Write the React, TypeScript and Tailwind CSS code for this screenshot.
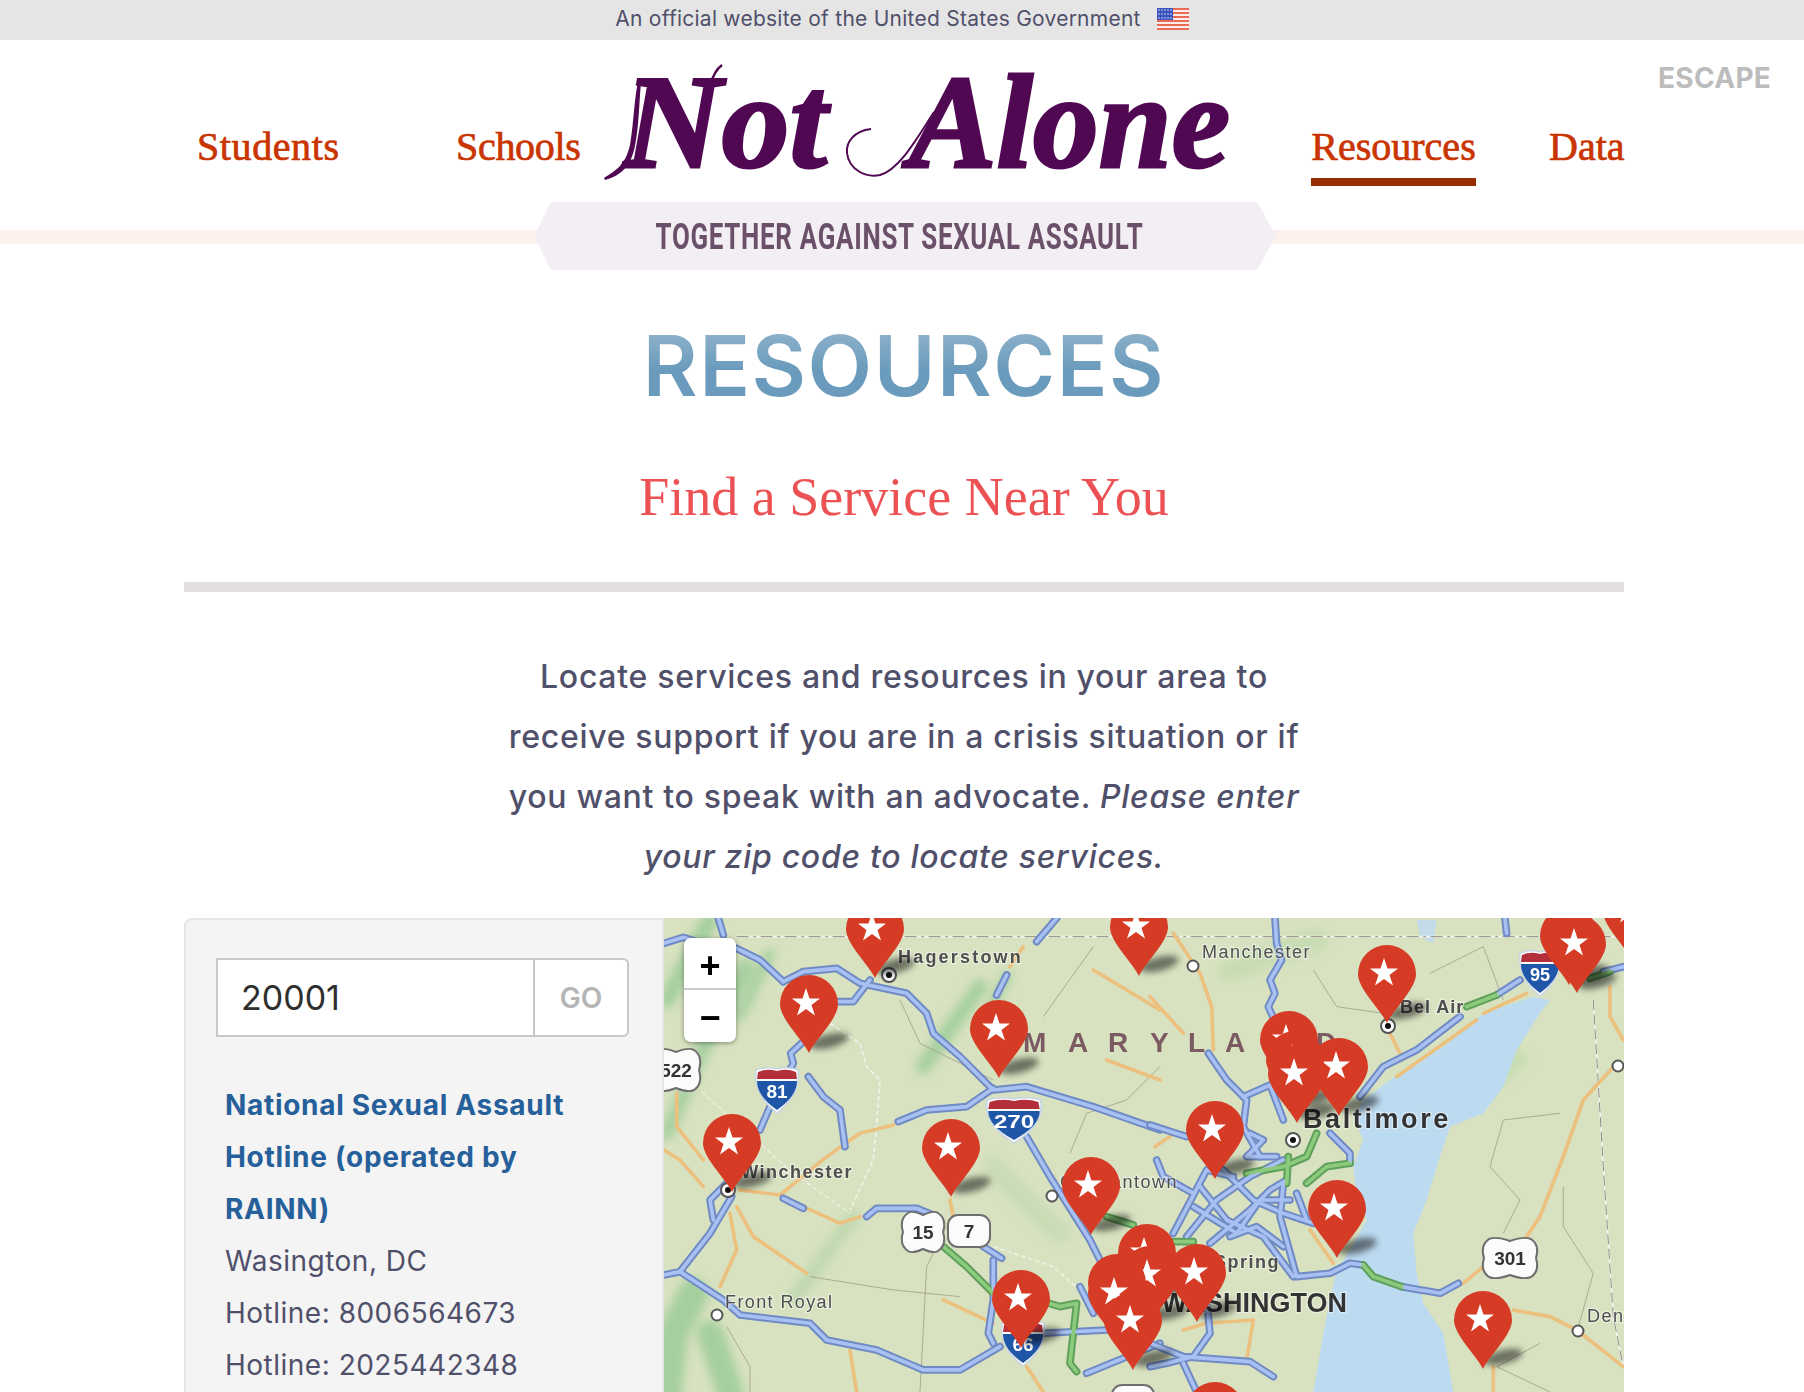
const SANS = "font-['Inter','Liberation_Sans',sans-serif]";

// map data, coordinates taken from the 3x crops of the map
const leftRoads = [
  "12,130 70,112 110,125",
  "175,55 190,105",
  "230,145 300,180 370,245",
  "430,215 530,205 600,250 740,280 800,340 820,400 900,470 1000,570 1100,560 1300,620 1500,690",
  "370,245 430,215",
  "535,305 580,305 630,240",
  "1130,125 1190,55",
  "1010,285 1040,225",
  "430,425 392,460 400,490 330,620 300,690",
  "215,890 150,1000 60,1115 12,1125",
  "160,960 150,900 200,850",
  "60,1115 190,1200 240,1245 450,1270 500,1320 650,1350 790,1410 900,1410 1020,1340",
  "445,530 490,590 540,630 555,740",
  "715,665 800,630 920,620 1000,565",
  "1100,710 1170,830 1290,1020 1320,1080",
  "620,950 650,925 770,925 830,950",
  "370,895 430,925",
  "970,1040 1025,1075",
  "1000,1080 1000,1200 985,1300 1000,1330",
  "1090,1305 1150,1300 1340,1290",
  "1260,1160 1300,1240",
  "1280,1420 1500,1330",
];
const leftGreen = [
  "850,1040 920,1100 1000,1180 1100,1190 1200,1220 1250,1210 1240,1300 1230,1390 1250,1415",
  "1340,950 1420,975",
];
const leftOrange = [
  "50,580 50,680 130,780",
  "12,750 60,780 130,860",
  "240,870 360,885 500,770 600,700 700,675",
  "430,920 540,970 600,950",
  "230,920 280,1010 440,1120",
  "210,940 230,1050 180,1160",
  "870,900 880,950",
  "850,1200 1000,1270",
  "1100,1400 1150,1476",
  "570,1350 590,1476",
  "1090,140 1050,200",
  "1300,210 1400,270 1500,330",
  "1340,480 1500,540",
];
const rightRoads = [
  "375,55 380,130 395,180 360,240 375,280 355,320 400,420",
  "175,460 230,540 290,600 280,680 330,770",
  "280,590 360,555 400,660",
  "0,675 110,710",
  "630,590 700,500 800,450 930,350",
  "1040,285 1110,240",
  "1360,215 1420,200",
  "1065,55 1070,100",
  "70,1000 170,810 250,830",
  "110,1010 200,900 300,830 400,780",
  "180,1030 300,930 360,870 410,840",
  "150,860 230,960 340,1010 430,1130",
  "220,810 310,900 400,940 490,970",
  "400,850 390,950 440,1130 540,1120 600,1090 640,1095",
  "20,780 40,830 130,880",
  "755,1160 870,1180 925,1150",
  "540,700 600,760 600,790",
  "170,1200 180,1300 130,1370 50,1390 0,1400",
  "0,1330 100,1370 300,1385 370,1430",
  "100,1390 140,1476",
  "240,1010 320,980 400,1040",
  "130,920 260,1000 330,900 420,900",
  "300,700 340,720 290,770 380,770",
  "440,880 470,960",
];
const rightGreen = [
  "640,1095 670,1130 755,1160",
  "950,320 1040,285",
  "1320,235 1380,215",
  "290,820 400,800 470,770 500,700",
  "415,770 410,850",
  "470,850 530,800 600,790",
  "60,1025 130,1025",
];
const rightOrange = [
  "70,100 150,220 185,320 190,450",
  "0,290 100,400",
  "720,400 750,460",
  "740,530 980,360",
  "1130,280 1000,340",
  "1380,260 1380,350 1420,420",
  "1400,490 1300,600 1240,770 1170,950 1130,1010",
  "1000,1100 940,1150",
  "1090,1230 1200,1250 1280,1290 1420,1400",
  "100,1290 170,1270 310,1260 290,1380",
  "480,990 550,1090",
  "1030,1400 1030,1476",
  "15,740 60,710",
];
const thinLines = [
  "720,300 780,430 900,490 1000,540",
  "780,1476 800,1100 880,940",
  "450,1130 700,1170 900,1190",
  "1150,350 1300,140",
  "1230,760 1280,640 1400,600 1500,500",
  "200,1280 270,1400 270,1476",
];
const thinLinesRight = [
  "490,210 560,320 700,340",
  "1020,800 1060,660 1230,640",
  "1020,800 1110,900 1060,1000",
  "1240,860 1240,980 1330,1120 1280,1300",
  "840,220 1000,140 1060,300",
  "1200,1476 1040,1400 1170,1330",
];
const pins = [
  [875, 978], [809, 1053], [999, 1078], [732, 1192], [951, 1197], [1091, 1235], [1021, 1348],
  [1139, 976], [1387, 1023], [1569, 985], [1577, 993], [1632, 960],
  [1289, 1089], [1339, 1116], [1295, 1109], [1297, 1123],
  [1215, 1179], [1337, 1258], [1147, 1302], [1150, 1324], [1117, 1332], [1197, 1322], [1117, 1342], [1133, 1370],
  [1483, 1369], [1215, 1460],
];
const cityDots = [
  [889, 975, true], [728, 1190, true], [717, 1315, false], [1052, 1196, false], [1193, 966, false],
  [1388, 1026, true], [1293, 1140, true], [1578, 1331, false], [1618, 1066, false],
] as const;

function Roads({ lines, green, orange }: { lines: string[]; green: string[]; orange: string[] }) {
  return (
    <g fill="none" strokeLinecap="round" strokeLinejoin="round">
      {orange.map((p) => (
        <polyline key={p} points={p} stroke="#ecc07e" strokeWidth="11" />
      ))}
      {lines.map((p) => (
        <polyline key={p} points={p} stroke="#6f8bc4" strokeWidth="23" />
      ))}
      {green.map((p) => (
        <polyline key={p} points={p} stroke="#5fa05c" strokeWidth="23" />
      ))}
      {lines.map((p) => (
        <polyline key={p + "i"} points={p} stroke="#a9c1f2" strokeWidth="11" />
      ))}
      {green.map((p) => (
        <polyline key={p + "i"} points={p} stroke="#8ccb7c" strokeWidth="11" />
      ))}
    </g>
  );
}

function InterstateShield({ x, y, label, w = 42 }: { x: number; y: number; label: string; w?: number }) {
  const s = w / 42;
  return (
    <g transform={`translate(${x},${y}) scale(${s},1)`}>
      <path d="M-21,-20 Q-10,-24 0,-21 Q10,-24 21,-20 Q24,4 0,23 Q-24,4 -21,-20Z" fill="#fff" stroke="#c9d6e6" strokeWidth="1.5" />
      <path d="M-19,-18 Q-10,-22 0,-19 Q10,-22 19,-18 L20,-11 L-20,-11Z" fill="#b3303a" />
      <path d="M-20,-9 L20,-9 Q20,6 0,20 Q-20,6 -20,-9Z" fill="#1f56a8" />
      <text y="8" textAnchor="middle" fontFamily="Liberation Sans" fontWeight="700" fontSize="19" fill="#fff">
        {label}
      </text>
    </g>
  );
}

function RouteShield({ x, y, w, h, label, scallop = false }: {
  x: number;
  y: number;
  w: number;
  h: number;
  label: string;
  scallop?: boolean;
}) {
  const l = x - w / 2;
  const r = x + w / 2;
  const t = y - h / 2;
  const b = y + h / 2;
  return (
    <g>
      {scallop ? (
        <path
          d={`M${l + 7},${t} Q${x - w / 4},${t - 3} ${x},${t + 2} Q${x + w / 4},${t - 3} ${r - 7},${t} Q${r + 2},${t + 6} ${r - 2},${y} Q${r + 2},${b - 6} ${r - 7},${b} Q${x + w / 4},${b + 3} ${x},${b - 2} Q${x - w / 4},${b + 3} ${l + 7},${b} Q${l - 2},${b - 6} ${l + 2},${y} Q${l - 2},${t + 6} ${l + 7},${t}Z`}
          fill="#fbfbfb"
          stroke="#6f6f6f"
          strokeWidth="2"
        />
      ) : (
        <rect x={l} y={t} width={w} height={h} rx="10" fill="#fbfbfb" stroke="#6f6f6f" strokeWidth="2" />
      )}
      <text x={x} y={y + 7} textAnchor="middle" fontFamily="Liberation Sans" fontWeight="700" fontSize="19" fill="#333">
        {label}
      </text>
    </g>
  );
}

function MapLabel({ x, y, children, size = 18, spacing = 1.5, weight = 700, anchor = "start", fill = "#4f4f4f" }: {
  x: number;
  y: number;
  children: string;
  size?: number;
  spacing?: number;
  weight?: number;
  anchor?: "start" | "end";
  fill?: string;
}) {
  return (
    <text
      x={x}
      y={y}
      textAnchor={anchor}
      fontFamily="Liberation Sans"
      fontWeight={weight}
      fontSize={size}
      letterSpacing={spacing}
      fill={fill}
      stroke="#fff"
      strokeOpacity="0.45"
      strokeWidth="2.5"
      paintOrder="stroke"
    >
      {children}
    </text>
  );
}

function MapArt() {
  return (
    <svg viewBox="664 918 960 474" className="block w-[960px] h-[474px]">
      <defs>
        <filter id="soft" x="-5%" y="-5%" width="110%" height="110%">
          <feGaussianBlur stdDeviation="0.6" />
        </filter>
        <filter id="wide" x="-20%" y="-20%" width="140%" height="140%">
          <feGaussianBlur stdDeviation="5" />
        </filter>
        <filter id="shadow" x="-50%" y="-100%" width="200%" height="300%">
          <feGaussianBlur stdDeviation="3" />
        </filter>
      </defs>
      <rect x="664" y="918" width="960" height="474" fill="#d8e2c0" />

      {/* ridges and water */}
      <g filter="url(#wide)">
        <g transform="translate(660,900) scale(0.3333)" fill="none" stroke="#a5cf9f" strokeLinecap="round">
          <polyline points="150,60 20,300" strokeWidth="50" />
          <polyline points="260,200 130,440" strokeWidth="50" />
          <polyline points="330,160 240,350" strokeWidth="30" />
          <polyline points="130,450 20,700" strokeWidth="40" />
          <polyline points="790,500 960,260" strokeWidth="45" />
          <polyline points="1040,230 1000,310" strokeWidth="30" />
          <polyline points="100,1180 40,1300 20,1476" strokeWidth="90" />
          <polyline points="210,1476 150,1300" strokeWidth="80" />
          <polyline points="580,950 400,1200" strokeWidth="40" strokeOpacity="0.5" />
          <polyline points="1000,800 1200,1000" strokeWidth="60" strokeOpacity="0.3" />
        </g>
        <g transform="translate(1150,900) scale(0.3333)" fill="none" stroke="#b9d8a8" strokeLinecap="round">
          <polyline points="240,210 500,120" strokeWidth="70" strokeOpacity="0.5" />
          <polyline points="1100,480 900,620" strokeWidth="60" strokeOpacity="0.6" />
        </g>
      </g>
      <g filter="url(#soft)">
        <g transform="translate(1150,900) scale(0.3333)">
          <polygon
            points="1150,290 1000,340 880,440 760,510 640,600 610,650 640,720 610,800 620,880 650,960 600,1050 560,1110 540,1200 520,1300 490,1476 910,1476 880,1300 820,1210 800,1120 790,1000 830,900 860,800 900,680 1000,640 1060,560 1100,450 1170,340 1200,300"
            fill="#bcdaf0"
          />
          <polygon points="800,60 860,60 850,130 810,110" fill="#c4dcea" />
          <g fill="none" stroke="#a49f8e" strokeWidth="2.5">
            {thinLinesRight.map((p) => (
              <polyline key={p} points={p} />
            ))}
          </g>
        </g>
        <g transform="translate(660,900) scale(0.3333)" fill="none" stroke="#a49f8e" strokeWidth="2.5">
          {thinLines.map((p) => (
            <polyline key={p} points={p} />
          ))}
          {/* state lines */}
          <polyline points="230,110 1500,110" stroke="#f4f4ec" strokeWidth="5" />
          <polyline points="230,110 1500,110" stroke="#8c8c84" strokeWidth="3" strokeDasharray="36 14 8 14" />
          <polyline
            points="510,370 600,430 620,500 660,540 650,670 640,780 570,930"
            stroke="#f2f2ea"
            strokeWidth="5"
            strokeDasharray="14 8"
          />
          <polyline points="125,575 400,820 570,940" stroke="#eef0e4" strokeWidth="4" strokeDasharray="14 8" />
          <polyline points="1000,1040 1180,1100 1270,1180" stroke="#eef0e4" strokeWidth="5" strokeDasharray="14 8" />
        </g>
        <g transform="translate(1150,900) scale(0.3333)" fill="none">
          <polyline points="50,110 1420,110" stroke="#f4f4ec" strokeWidth="5" />
          <polyline points="50,110 1420,110" stroke="#8c8c84" strokeWidth="3" strokeDasharray="36 14 8 14" />
          <polyline points="1330,300 1360,800 1390,1250 1420,1400" stroke="#f4f4ec" strokeWidth="5" />
          <polyline points="1330,300 1360,800 1390,1250 1420,1400" stroke="#8c8c84" strokeWidth="3" strokeDasharray="30 14" />
        </g>
        <g transform="translate(660,900) scale(0.3333)">
          <Roads lines={leftRoads} green={leftGreen} orange={leftOrange} />
        </g>
        <g transform="translate(1150,900) scale(0.3333)">
          <Roads lines={rightRoads} green={rightGreen} orange={rightOrange} />
        </g>
      </g>

      {cityDots.map(([x, y, big]) => (
        <g key={`${x}-${y}`}>
          <circle cx={x} cy={y} r={big ? 7 : 5.5} fill="#fff" stroke="#555" strokeWidth="2" />
          {big && <circle cx={x} cy={y} r="3" fill="#111" />}
        </g>
      ))}

      <InterstateShield x={777} y={1090} label="81" />
      <InterstateShield x={1014} y={1120} label="270" w={54} />
      <InterstateShield x={1540} y={973} label="95" w={40} />
      <InterstateShield x={1023} y={1343} label="66" />
      <RouteShield x={676} y={1070} w={50} h={40} label="522" scallop />
      <RouteShield x={923} y={1232} w={44} h={38} label="15" scallop />
      <RouteShield x={969} y={1231} w={42} h={32} label="7" />
      <RouteShield x={1510} y={1258} w={56} h={38} label="301" scallop />
      <RouteShield x={1133} y={1400} w={42} h={30} label="" />

      <MapLabel x={898} y={963} spacing={2.2}>Hagerstown</MapLabel>
      <MapLabel x={853} y={1178} anchor="end">Winchester</MapLabel>
      <MapLabel x={725} y={1308} weight={400} spacing={1.4}>Front Royal</MapLabel>
      <MapLabel x={1178} y={1188} anchor="end" weight={400}>Germantown</MapLabel>
      <MapLabel x={1202} y={958} weight={400} spacing={1.5}>Manchester</MapLabel>
      <MapLabel x={1400} y={1013} spacing={1}>Bel Air</MapLabel>
      <MapLabel x={1303} y={1128} size={27} spacing={2.6} fill="#333">Baltimore</MapLabel>
      <MapLabel x={1280} y={1268} anchor="end">Silver Spring</MapLabel>
      <MapLabel x={1347} y={1312} anchor="end" size={27} spacing={0} fill="#333">WASHINGTON</MapLabel>
      <MapLabel x={1587} y={1322} weight={400}>Denton</MapLabel>
      <text
        x="1023 1068 1108 1150 1188 1225 1272 1316"
        y="1052"
        fontFamily="Liberation Sans"
        fontWeight="700"
        fontSize="28"
        fill="#7b5a62"
      >
        MARYLAND
      </text>

      {pins.map(([x, y]) => (
        <ellipse
          key={`s${x}-${y}`}
          cx={x + 20}
          cy={y - 12}
          rx="20"
          ry="7"
          transform={`rotate(-14 ${x + 20} ${y - 12})`}
          fill="#000"
          fillOpacity="0.5"
          filter="url(#shadow)"
        />
      ))}
      {pins.map(([x, y]) => (
        <g key={`${x}-${y}`} transform={`translate(${x},${y})`}>
          <path d="M0,0 C-6,-13 -29,-34 -29,-49 A29,29 0 1 1 29,-49 C29,-34 6,-13 0,0Z" fill="#d63b26" />
          <polygon
            points="-3,-65 0.5,-54.5 11,-54.5 2.5,-48 6,-37.5 -3,-44 -12,-37.5 -8.5,-48 -17,-54.5 -6.5,-54.5"
            fill="#fff"
          />
        </g>
      ))}
    </svg>
  );
}

function Flag() {
  return (
    <svg viewBox="0 0 32 22" className="w-8 h-[22px] ml-[16px]">
      <rect width="32" height="22" fill="#fbeee8" />
      {[0, 4, 8, 12, 16, 20].map((y) => (
        <rect key={y} y={y} width="32" height="2" fill="#ea6a55" />
      ))}
      <rect width="16" height="12" fill="#3a53bf" />
      {[2, 5, 8, 11, 14].map((x) =>
        [2, 6, 10].map((y) => <rect key={`${x}-${y}`} x={x - 0.6} y={y - 0.6} width="1.2" height="1.2" fill="#fff" />)
      )}
    </svg>
  );
}

function Logo() {
  return (
    <svg viewBox="596 56 642 130" className="block w-[642px] h-[130px]">
      <g
        fill="#500852"
        stroke="#500852"
        strokeWidth="3"
        fontFamily="Liberation Serif"
        fontStyle="italic"
        fontWeight="700"
        fontSize="134"
      >
        <text x="620" y="167" textLength="203" lengthAdjust="spacingAndGlyphs">Not</text>
        <text x="905" y="167" textLength="321" lengthAdjust="spacingAndGlyphs">Alone</text>
      </g>
      <path d="M600,178 C612,170 621,166 626,145 C630,120 630,100 634,82 L637,82 C635,105 635,125 631,146 C626,170 614,176 601,180Z" fill="#500852" />
      <path d="M698,130 C702,105 704,75 718,65" fill="none" stroke="#500852" strokeWidth="2.5" />
      <path d="M867,129 C850,131 842,142 843,153 C845,170 862,178 876,175 C895,170 912,140 930,112" fill="none" stroke="#500852" strokeWidth="2" />
    </svg>
  );
}

export default function App() {
  const navLink = "font-['Liberation_Serif',serif] text-[40px] leading-[44px] [-webkit-text-stroke:0.7px] text-[#c93400]";
  return (
    <div className={`h-[1392px] overflow-hidden bg-white ${SANS}`}>
      <div className="h-10 bg-[#e5e5e5] flex items-center justify-center text-[21px] tracking-[0.25px] text-[#50506a] pb-[2px]">
        <span>An official website of the United States Government</span>
        <Flag />
      </div>

      <header className="relative h-[190px]">
        <a className="absolute left-[1658px] top-[21px] text-[28px] leading-[34px] font-bold tracking-[0.3px] text-[#bcbcbc]">ESCAPE</a>
        <nav className="flex items-start pl-[197px]">
          <a className={`${navLink} w-[259px] mt-[85px] tracking-[0.6px]`}>Students</a>
          <a className={`${navLink} w-[144px] mt-[85px] tracking-[-0.3px]`}>Schools</a>
          <div className="w-[642px] mt-[16px]">
            <Logo />
          </div>
          <a className={`${navLink} ml-[69px] mt-[85px] w-[165px] text-center h-[61px] border-b-8 border-[#992d00] text-[#992d00]`}>Resources</a>
          <a className={`${navLink} ml-[73px] mt-[85px]`}>Data</a>
        </nav>
      </header>

      <div className="relative h-[14px] bg-[#fdf1ed]">
        <div className="absolute left-[534px] top-[-28px] w-[742px] h-[68px] bg-[#f3edf4] flex items-center justify-center pr-[12px] [clip-path:polygon(17px_0,calc(100%-19px)_0,100%_50%,calc(100%-19px)_100%,17px_100%,0_50%)]">
          <span className="font-['Roboto',sans-serif] font-bold text-[37px] leading-none tracking-[1px] text-[#6b5069] whitespace-nowrap scale-x-[0.70]">
            TOGETHER AGAINST SEXUAL ASSAULT
          </span>
        </div>
      </div>

      <main className="w-[1440px] ml-[184px]">
        <h1 className="mt-[80px] text-center text-[84px] leading-[84px] tracking-[1.5px] font-semibold bg-[linear-gradient(#93b5cd,#6a9bbc_55%)] bg-clip-text text-transparent">
          RESOURCES
        </h1>
        <h2 className="mt-[59px] text-center font-['Liberation_Serif',serif] text-[54px] leading-[60px] text-[#ec5254]">
          Find a Service Near You
        </h2>
        <div className="mt-[55px] h-[10px] bg-[#e3dfdf]" />
        <p className="mt-[55px] w-[820px] mx-auto text-center text-[32px] leading-[60px] tracking-[0.7px] font-medium text-[#50506a]">
          Locate services and resources in your area to
          <br />
          receive support if you are in a crisis situation or if
          <br />
          you want to speak with an advocate. <em>Please enter</em>
          <br />
          <em>your zip code to locate services.</em>
        </p>

        <section className="mt-[31px] flex h-[520px]">
          <aside className="w-[480px] shrink-0 bg-[#f4f4f4] border-2 border-[#e6e6e6] rounded-tl-[8px] pl-[30px] pr-[33px] pt-[38px]">
            <div className="flex h-[79px]">
              <div className="flex-1 bg-white border-2 border-[#c8c8c8] flex items-center pl-[23px] text-[34px] text-[#2f2f2f]">
                20001
              </div>
              <div className="w-[94px] bg-white border-2 border-l-0 border-[#c8c8c8] rounded-r-[6px] flex items-center justify-center text-[28px] font-semibold text-[#b5b5b5]">
                GO
              </div>
            </div>
            <div className="mt-[42px] pl-[9px] text-[28px] leading-[52px] tracking-[0.5px] text-[#50506a]">
              <a className="block w-[390px] font-bold tracking-[0.7px] text-[#26609a]">National Sexual Assault Hotline (operated by RAINN)</a>
              <div>Wasington, DC</div>
              <div>Hotline: 8006564673</div>
              <div>Hotline: 2025442348</div>
            </div>
          </aside>
          <div className="relative flex-1 overflow-hidden">
            <MapArt />
            <div className="absolute left-[20px] top-[20px] w-[52px] h-[104px] bg-white rounded-[7px] shadow-[0_1px_5px_rgba(0,0,0,0.4)] flex flex-col text-black font-['Liberation_Sans',sans-serif] font-bold text-[36px]">
              <a className="h-[52px] pt-[6px] flex items-center justify-center border-b-2 border-[#ccc]">+</a>
              <a className="h-[52px] pt-[4px] flex items-center justify-center">−</a>
            </div>
          </div>
        </section>
      </main>
    </div>
  );
}
